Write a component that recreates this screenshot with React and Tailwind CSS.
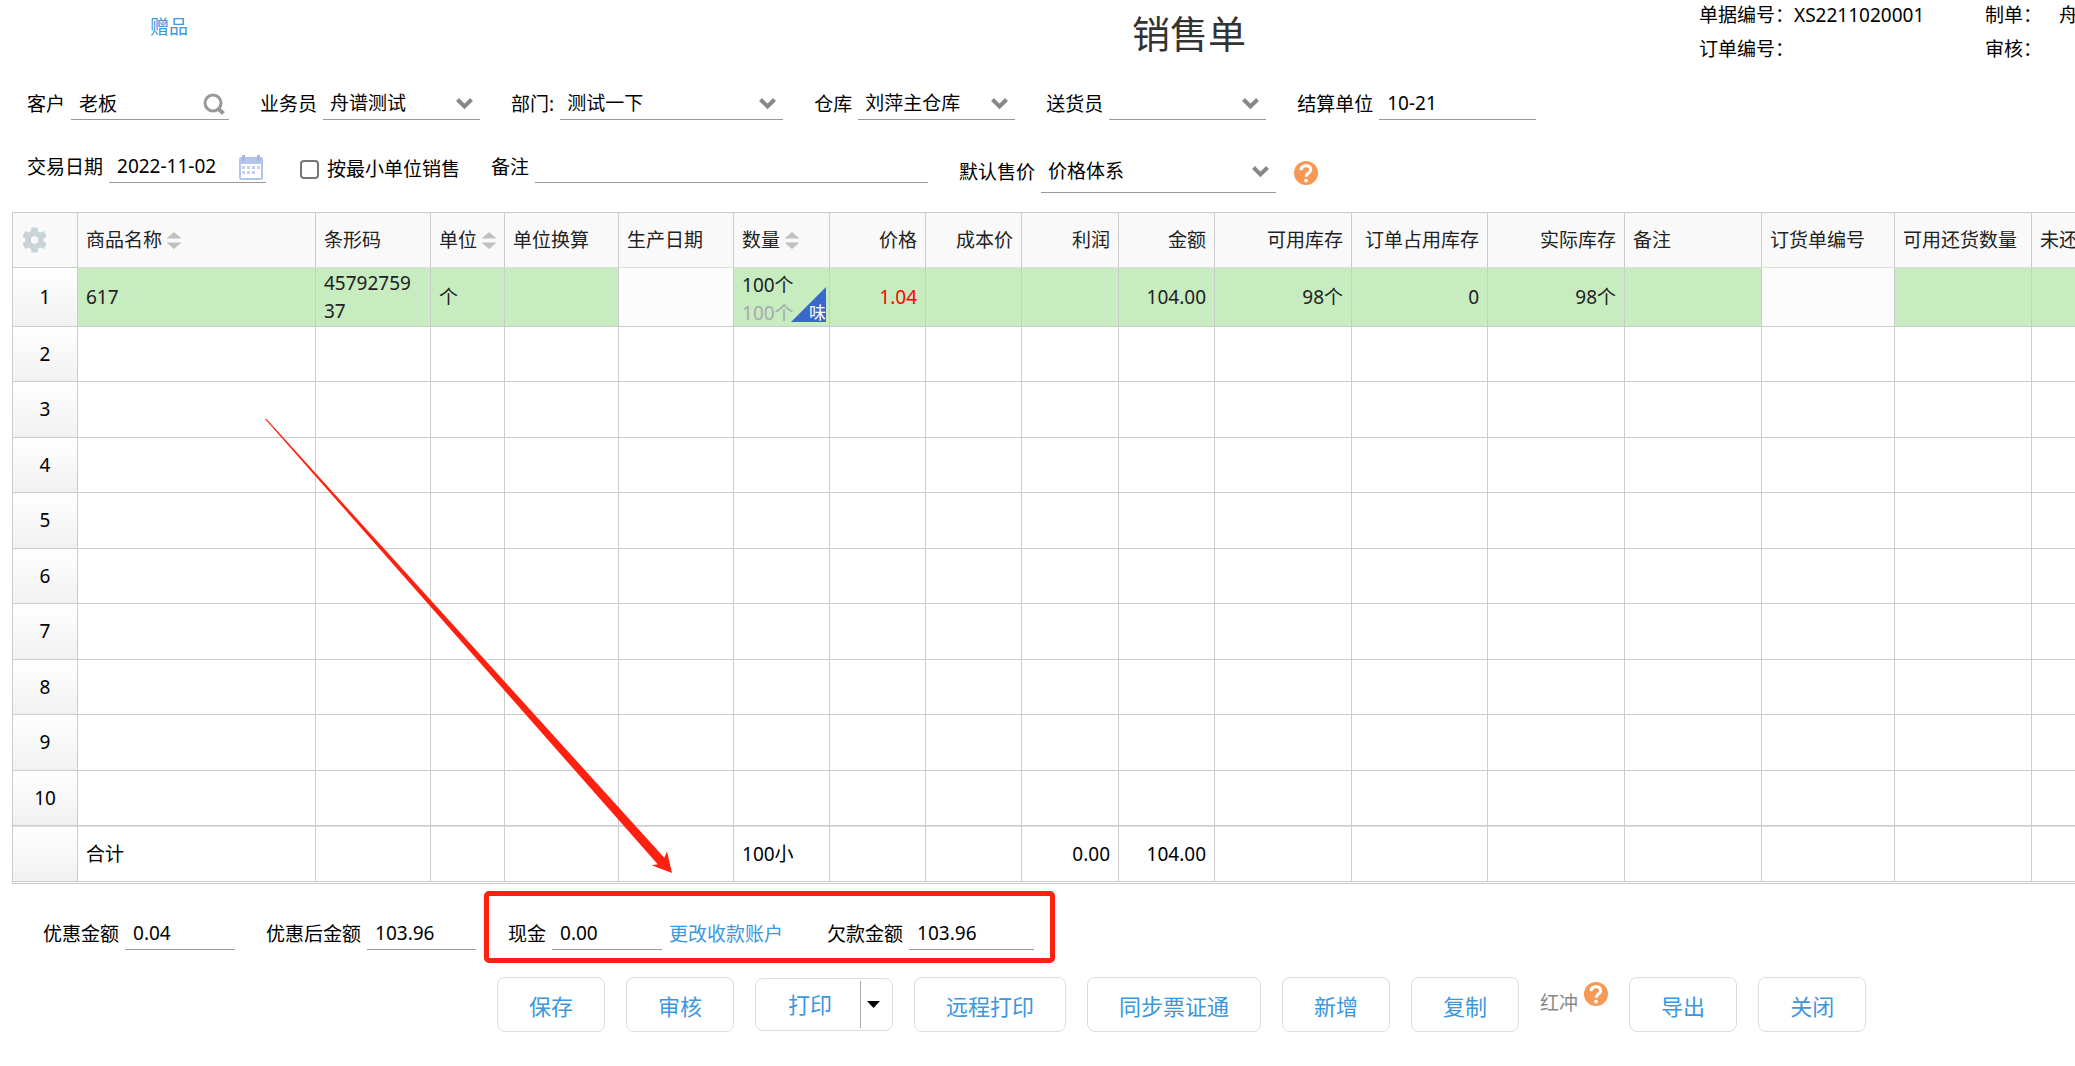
import { useState } from "react";

const columns = [
  { key: "name", title: "商品名称", width: "w-[238px]", sortable: true },
  { key: "barcode", title: "条形码", width: "w-[115px]" },
  { key: "unit", title: "单位", width: "w-[74px]", sortable: true },
  { key: "convert", title: "单位换算", width: "w-[114px]" },
  { key: "produced", title: "生产日期", width: "w-[115px]", readOnly: true },
  { key: "qty", title: "数量", width: "w-[96px]", sortable: true },
  { key: "price", title: "价格", width: "w-[96px]", right: true },
  { key: "cost", title: "成本价", width: "w-[96px]", right: true },
  { key: "profit", title: "利润", width: "w-[97px]", right: true },
  { key: "amount", title: "金额", width: "w-[96px]", right: true },
  { key: "available", title: "可用库存", width: "w-[137px]", right: true },
  { key: "reserved", title: "订单占用库存", width: "w-[136px]", right: true },
  { key: "stock", title: "实际库存", width: "w-[137px]", right: true },
  { key: "remark", title: "备注", width: "w-[137px]" },
  { key: "orderNo", title: "订货单编号", width: "w-[133px]", readOnly: true },
  { key: "returnable", title: "可用还货数量", width: "w-[137px]" },
  { key: "unreturned", title: "未还货数量", width: "w-[137px]" },
];

const item = {
  name: "617",
  barcode: "4579275937",
  unit: "个",
  price: "1.04",
  amount: "104.00",
  available: "98个",
  reserved: "0",
  stock: "98个",
};

const totals = { name: "合计", qty: "100小", profit: "0.00", amount: "104.00" };

const emptyRows = [2, 3, 4, 5, 6, 7, 8, 9, 10];

const SearchIcon = () => (
  <svg width="22" height="22" viewBox="0 0 22 22" fill="none" stroke="#999">
    <circle cx="10" cy="10" r="8" strokeWidth="3" />
    <path d="M15 15.500L20.500 20.500" strokeWidth="4" />
  </svg>
);

const ChevronIcon = () => (
  <svg
    className="pointer-events-none absolute right-[7px] top-[9px]"
    width="17"
    height="12"
    viewBox="0 0 17 12"
    fill="none"
    stroke="#888"
    strokeWidth="4"
  >
    <path d="M1.500 1.500l7 7 7-7" />
  </svg>
);

const CalendarIcon = () => (
  <svg width="24" height="25" viewBox="0 0 24 25">
    <path d="M0 4a2 2 0 0 1 2-2h20a2 2 0 0 1 2 2v19a2 2 0 0 1-2 2H2a2 2 0 0 1-2-2z" fill="#b4c4ea" />
    <path d="M3 0h3v6H3zM18 0h3v6h-3z" fill="#a3b6e4" />
    <path d="M2 9h20v14H2z" fill="#fff" />
    <path
      d="M8 11h3v3H8zM13 11h3v3h-3zM18 11h3v3h-3zM3 11h3v3H3zM3 16h3v3H3zM8 16h3v3H8zM13 16h3v3h-3z"
      fill="#c5d1f0"
    />
  </svg>
);

const GearIcon = () => (
  <svg width="28" height="28" viewBox="0 0 24 24" fill="#c9d3da">
    <path d="M19.400 13c.04-.3.060-.65.060-1s-.02-.7-.07-1l2.300-1.800c.2-.15.260-.45.130-.68l-2.100-3.700c-.13-.24-.41-.32-.65-.24l-2.600 1.050a7.600 7.600 0 0 0-1.800-1.040L14.300 1.800a.54.540 0 0 0-.53-.45h-4.300c-.27 0-.49.19-.53.450l-.4 2.780c-.65.270-1.250.62-1.800 1.040L4.100 4.570c-.24-.09-.52 0-.65.240l-2.100 3.700c-.13.230-.08.53.130.68L3.800 11c-.05.300-.08.650-.08 1s.03.700.080 1l-2.300 1.800c-.2.150-.26.450-.13.680l2.100 3.700c.13.240.41.320.65.240l2.600-1.050c.55.420 1.150.770 1.800 1.040l.4 2.780c.04.260.26.450.53.450h4.300c.27 0 .49-.19.530-.45l.4-2.780a7.600 7.600 0 0 0 1.800-1.040l2.600 1.050c.24.090.52 0 .65-.24l2.100-3.700c.13-.23.080-.53-.13-.68zM11.600 15.200a3.200 3.200 0 1 1 0-6.400 3.200 3.200 0 0 1 0 6.400z" />
  </svg>
);

const HelpIcon = () => (
  <svg width="24" height="24" viewBox="0 0 24 24" fill="none">
    <circle cx="12" cy="12" r="12" fill="#f79855" />
    <path
      d="M7.200 9.200C7.200 6.200 9.300 4.600 12 4.600s4.700 1.700 4.700 4.200c0 3.200-4.500 3.400-4.500 7"
      stroke="#fff"
      strokeWidth="3.200"
    />
    <circle cx="12.100" cy="19.600" r="1.900" fill="#fff" />
  </svg>
);

const SortIcon = () => (
  <svg width="14" height="17" viewBox="0 0 14 17">
    <path d="M7 0l7 6H0zM0 11h14l-7 6z" fill="#c0c0c0" />
    <path d="M0 6h14v1H0zM0 10h14v1H0z" fill="#ddd" />
  </svg>
);

const Field = ({ id, label, width, children, ...props }) => (
  <div className="flex shrink-0 gap-[6px]">
    <label htmlFor={id} className="leading-[31px]">
      {label}
    </label>
    <div className={`flex h-[31px] items-center border-b border-[#999] ${width}`}>
      <input
        id={id}
        className="h-[30px] w-full min-w-0 bg-transparent pb-0.5 pl-2 outline-none"
        {...props}
      />
      {children}
    </div>
  </div>
);

const SelectField = ({ id, label, width, height = "h-[31px]", chevron = "", options }) => (
  <div className="flex shrink-0 gap-[6px]">
    <label htmlFor={id} className={`flex items-center ${height}`}>
      {label}
    </label>
    <div className={`relative border-b border-[#999] ${height} ${width}`}>
      <select
        id={id}
        className="h-full w-full appearance-none bg-transparent pb-0.5 pl-[7px] outline-none"
      >
        {options.map((option) => (
          <option key={option}>{option}</option>
        ))}
      </select>
      <span className={`pointer-events-none absolute inset-x-0 top-0 ${chevron}`}>
        <span className="relative block">
          <ChevronIcon />
        </span>
      </span>
    </div>
  </div>
);

const ActionButton = ({ children }) => (
  <button
    type="button"
    className="h-[55px] shrink-0 rounded-lg border border-[#ddd] bg-white px-[31px] pt-1 text-[22px] text-[#3a97e0]"
  >
    {children}
  </button>
);

const QtyCell = () => (
  <div className="relative -ml-2 h-[58px] pl-2 pt-[3px] leading-7">
    <div>100个</div>
    <div className="text-[#aaa]">100个</div>
    <div className="absolute bottom-1 right-[3px] h-[35px] w-[35px] overflow-hidden">
      <svg className="absolute inset-0" width="35" height="35" viewBox="0 0 35 35">
        <path d="M35 0v35H0z" fill="#3868cc" />
      </svg>
      <span className="absolute bottom-0 left-[18px] text-[17px] leading-[18px] text-white">
        味
      </span>
    </div>
  </div>
);

const rowHeadClass =
  "border-b border-r border-[#ccc] bg-linear-to-b from-white to-[#f1f1f1] text-center font-normal text-black";

const App = () => {
  const [smallestUnit, setSmallestUnit] = useState(false);

  return (
    <div className="min-h-screen overflow-hidden whitespace-nowrap bg-white font-['Noto_Sans','Noto_Sans_CJK_SC',sans-serif] text-[19px] text-black">
      {/* Title bar */}
      <header className="grid h-[89px] grid-cols-[1132fr_567fr_376fr]">
        <a href="#gift" className="pl-[150px] pt-3 leading-[30px] text-[#3a97e0]">
          赠品
        </a>
        <h1 className="pt-[14px] text-[38px] leading-[38px] text-[#333]">销售单</h1>
        <div className="flex gap-[29px] overflow-hidden leading-[30px]">
          <div className="flex w-[257px] shrink-0 flex-col gap-1">
            <div>单据编号：XS2211020001</div>
            <div>订单编号：</div>
          </div>
          <div className="flex flex-col gap-1">
            <div className="flex gap-[17px]">
              <span>制单：</span>
              <span>舟谱测试</span>
            </div>
            <div>审核：</div>
          </div>
        </div>
      </header>

      {/* Order form */}
      <div className="flex gap-[31px] pl-[27px]">
        <Field id="customer" label="客户" width="w-[158px]" defaultValue="老板">
          <button type="button" aria-label="搜索" className="shrink-0 pr-1">
            <SearchIcon />
          </button>
        </Field>
        <SelectField id="salesman" label="业务员" width="w-[157px]" options={["舟谱测试"]} />
        <SelectField id="department" label="部门:" width="w-[223px]" options={["测试一下"]} />
        <SelectField id="warehouse" label="仓库" width="w-[157px]" options={["刘萍主仓库"]} />
        <SelectField id="courier" label="送货员" width="w-[157px]" options={[""]} />
        <Field id="settlement" label="结算单位" width="w-[157px]" defaultValue="10-21" />
      </div>

      <div className="mt-8 flex items-start gap-[31px] pl-[27px]">
        <Field id="date" label="交易日期" width="w-[157px]" defaultValue="2022-11-02">
          <button type="button" aria-label="选择日期" className="shrink-0 pr-[3px]">
            <CalendarIcon />
          </button>
        </Field>
        <label className="flex h-[34px] items-center gap-2 pl-[3px]">
          <input
            type="checkbox"
            className="h-[19px] w-[19px] appearance-none rounded-[4px] border-2 border-[#767676] bg-white checked:bg-[#3a97e0]"
            checked={smallestUnit}
            onChange={(e) => setSmallestUnit(e.target.checked)}
          />
          按最小单位销售
        </label>
        <Field id="remark" label="备注" width="w-[393px]" />
        <div className="flex items-center gap-[18px]">
          <SelectField
            id="defaultPrice"
            label="默认售价"
            width="w-[235px]"
            height="h-[41px]"
            chevron="pt-[5px]"
            options={["价格体系"]}
          />
          <HelpIcon />
        </div>
      </div>

      {/* Product lines */}
      <div className="ml-3 mt-[19px] overflow-hidden border-l border-t border-b border-[#ccc] pb-px">
        <table className="w-max table-fixed border-separate border-spacing-0 text-[#222]">
          <thead>
            <tr className="h-[55px]">
              <th className="w-[65px] border-b border-r border-[#ccc] bg-[#f9f9f9] pl-2">
                <button type="button" aria-label="设置" className="block">
                  <GearIcon />
                </button>
              </th>
              {columns.map((col) => (
                <th
                  key={col.key}
                  className={`border-b border-r border-[#ccc] border-b-[#ddd] bg-[#f9f9f9] px-2 font-normal ${col.width} ${
                    col.right ? "text-right" : "text-left"
                  }`}
                >
                  <span className="inline-flex items-center gap-[5px]">
                    {col.title}
                    {col.sortable && <SortIcon />}
                  </span>
                </th>
              ))}
            </tr>
          </thead>
          <tbody>
            <tr className="h-[59px]">
              <th className={rowHeadClass}>1</th>
              {columns.map((col) => (
                <td
                  key={col.key}
                  className={`border-b border-r border-[#ccc] py-0 pl-2 leading-7 ${
                    col.readOnly ? "bg-[#fcfcfc]" : "bg-[#c6ecc0]"
                  } ${col.right ? "pr-2 text-right" : ""} ${
                    col.key === "price" ? "text-[#f00]" : ""
                  } ${
                    col.key === "barcode" ? "whitespace-normal break-all pr-3" : ""
                  }`}
                >
                  {col.key === "qty" ? <QtyCell /> : item[col.key]}
                </td>
              ))}
            </tr>
            {emptyRows.map((row) => (
              <tr key={row} className="h-14 even:h-[55px]">
                <th className={rowHeadClass}>{row}</th>
                {columns.map((col) => (
                  <td key={col.key} className="border-b border-r border-[#ccc]" />
                ))}
              </tr>
            ))}
          </tbody>
          <tfoot>
            <tr className="h-14 text-black">
              <th className={`border-t border-t-[#ddd] ${rowHeadClass}`} />
              {columns.map((col) => (
                <td
                  key={col.key}
                  className={`border-b border-r border-t border-[#ccc] border-t-[#ddd] px-2 ${
                    col.right ? "text-right" : ""
                  }`}
                >
                  {totals[col.key]}
                </td>
              ))}
            </tr>
          </tfoot>
        </table>
      </div>

      {/* Payment */}
      <div className="mt-[7px] flex h-[72px] items-end pl-[43px]">
        <div className="flex gap-[31px] pb-[13px]">
          <Field id="discount" label="优惠金额" width="w-[110px]" defaultValue="0.04" />
          <Field id="discounted" label="优惠后金额" width="w-[109px]" defaultValue="103.96" />
        </div>
        <div className="ml-2 flex h-full items-end rounded-[5px] border-[5px] border-[#ff2010] pb-2 pl-[19px] pr-4">
          <Field id="cash" label="现金" width="w-[110px]" defaultValue="0.00" />
          <a href="#account" className="ml-[7px] leading-[31px] text-[#3a97e0]">
            更改收款账户
          </a>
          <div className="ml-11">
            <Field id="debt" label="欠款金额" width="w-[125px]" defaultValue="103.96" />
          </div>
        </div>
      </div>

      {/* Actions */}
      <div className="mt-[14px] flex items-center gap-[21px] pl-[497px]">
        <ActionButton>保存</ActionButton>
        <ActionButton>审核</ActionButton>
        <div className="flex h-[53px] w-[138px] shrink-0 items-center rounded-lg border border-[#ddd]">
          <button type="button" className="h-full flex-1 pl-1 text-[22px] text-[#3a97e0]">
            打印
          </button>
          <button
            type="button"
            aria-label="更多打印"
            className="flex h-[47px] w-8 items-center border-l border-[#aaa] pl-[6px]"
          >
            <svg width="13" height="7" viewBox="0 0 13 7">
              <path d="M0 0h13L6.500 7z" />
            </svg>
          </button>
        </div>
        <ActionButton>远程打印</ActionButton>
        <ActionButton>同步票证通</ActionButton>
        <ActionButton>新增</ActionButton>
        <ActionButton>复制</ActionButton>
        <div className="flex h-[55px] shrink-0 items-start gap-[6px] pt-[5px]">
          <button type="button" className="pt-[7px] leading-[28px] text-[#888]">
            红冲
          </button>
          <HelpIcon />
        </div>
        <ActionButton>导出</ActionButton>
        <ActionButton>关闭</ActionButton>
      </div>

      {/* Pointer to the payment fields */}
      <svg
        className="pointer-events-none absolute left-[265px] top-[419px]"
        width="407"
        height="454"
        viewBox="0 0 407 454"
      >
        <path
          d="M0 0L1.500 0 399.300 438.700 402 432.500 407 454 386.700 446.300 392.700 445.300z"
          fill="#ff2010"
        />
      </svg>
    </div>
  );
};

export default App;
